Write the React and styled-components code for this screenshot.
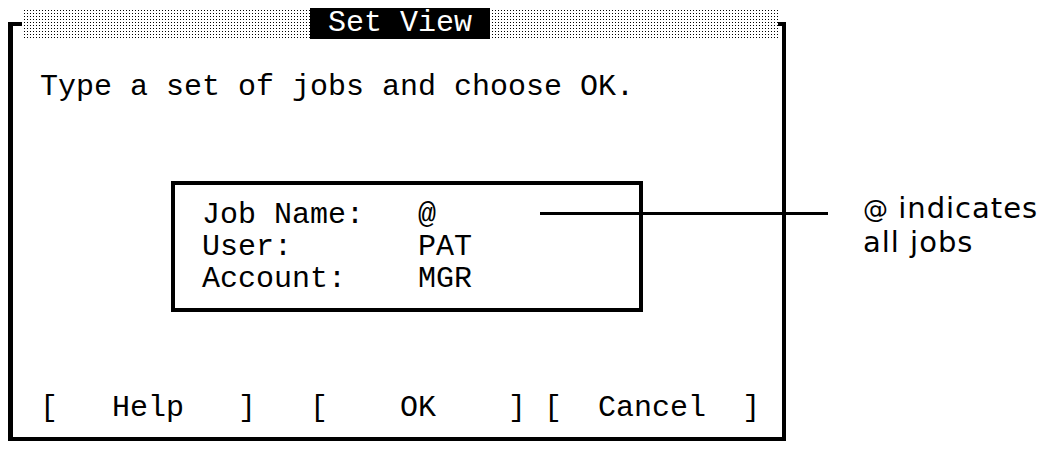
import { Fragment } from 'react'
import styled, { createGlobalStyle } from 'styled-components'

const GlobalStyle = createGlobalStyle`
body{
  margin:0;
  background:#fff;
}
`

const Stage = styled.div`
position:relative;
width:1048px;
height:449px;
box-sizing:border-box;
padding:22px 0 0 8px;
background:#fff;
color:#000;
overflow:hidden;
`

const Dialog = styled.section`
position:relative;
width:778px;
height:419px;
box-sizing:border-box;
border:4px solid #000;
border-left-width:5px;
padding:45px 0 13px 27px;
display:flex;
flex-direction:column;
font-family:'Liberation Mono', 'DejaVu Sans Mono', monospace;
font-size:30px;
line-height:32px;
`

// dotted title band sits over the top edge of the frame
const TitleBand = styled.div`
position:absolute;
top:-18px;
left:9px;
right:4px;
height:32px;
display:flex;
justify-content:center;
background-color:#000;
background-image:
  linear-gradient(to right, #fff 2px, transparent 2px),
  linear-gradient(to bottom, #fff 2px, transparent 2px);
background-size:3px 3px;
`

const TitleLabel = styled.h1`
margin:0;
height:31px;
padding:0 18px;
background:#000;
color:#fff;
font-family:inherit;
font-size:30px;
font-weight:normal;
line-height:31px;
white-space:pre;
`

const Prompt = styled.p`
margin:0;
white-space:pre;
`

const FieldBox = styled.div`
width:472px;
box-sizing:border-box;
margin:78px 0 0 131px;
border:4px solid #000;
padding:14px 0 13px 27px;
display:grid;
grid-template-columns:216px auto;
`

const Label = styled.span`
white-space:pre;
`

const Value = styled.span`
white-space:pre;
`

const ButtonRow = styled.div`
margin-top:auto;
display:flex;
`

const Button = styled.button`
margin:0 0 0 ${p => p.$gap * 18}px;
padding:0;
border:none;
background:none;
color:#000;
font:inherit;
white-space:pre;
cursor:pointer;
`

const Leader = styled.div`
position:absolute;
left:540px;
top:212px;
width:288px;
height:3px;
background:#000;
`

const Note = styled.div`
position:absolute;
left:863px;
top:191px;
font-family:'DejaVu Sans', 'Open Sans', sans-serif;
font-size:29px;
letter-spacing:1px;
`

const NoteLine = styled.div`
height:34px;
line-height:34px;
white-space:pre;
`

const At = styled.span`
font-size:25px;
letter-spacing:0;
`

const fields = [
  { label: 'Job Name:', value: '@' },
  { label: 'User:', value: 'PAT' },
  { label: 'Account:', value: 'MGR' },
]

const buttons = [
  { text: '[   Help   ]', gap: 0 },
  { text: '[    OK    ]', gap: 3 },
  { text: '[  Cancel  ]', gap: 1 },
]

export default function App(){
  return(
    <>
      <GlobalStyle />
      <Stage>
        <Dialog>
          <TitleBand>
            <TitleLabel>Set View</TitleLabel>
          </TitleBand>
          <Prompt>Type a set of jobs and choose OK.</Prompt>
          <FieldBox>
            {fields.map(f => (
              <Fragment key={f.label}>
                <Label>{f.label}</Label>
                <Value>{f.value}</Value>
              </Fragment>
            ))}
          </FieldBox>
          <ButtonRow>
            {buttons.map(b => (
              <Button key={b.text} $gap={b.gap}>{b.text}</Button>
            ))}
          </ButtonRow>
        </Dialog>
        <Leader />
        <Note>
          <NoteLine><At>@</At> indicates</NoteLine>
          <NoteLine>all jobs</NoteLine>
        </Note>
      </Stage>
    </>
  )
}
